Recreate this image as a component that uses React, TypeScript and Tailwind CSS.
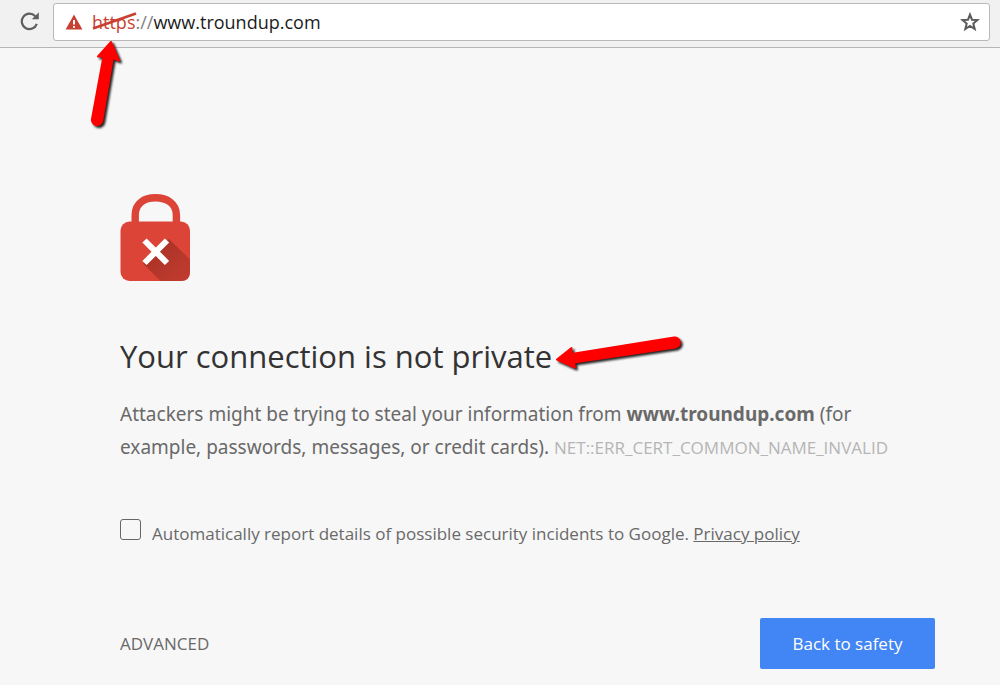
import { FC } from 'react'

const ReloadIcon: FC = () => (
  <svg viewBox="0 0 20 20" className="w-5 h-5" aria-hidden="true">
    <path d="M16.8 12.9A7.700 7.700 0 1 1 15.2 5.2" fill="none" stroke="#5f5f5f" strokeWidth="2.2" />
    <path d="M18.8 1.3V8.3H11.8Z" fill="#5f5f5f" />
  </svg>
)

const WarningIcon: FC = () => (
  <svg viewBox="0 0 18 16" className="w-[18px] h-4 shrink-0" aria-hidden="true">
    <path d="M9 0.6L17.4 15.4H0.6Z" fill="#c93f31" />
    <path d="M8 6H10V10.6H8ZM8 12H10V13.8H8Z" fill="#fff" />
  </svg>
)

const StarIcon: FC = () => (
  <svg viewBox="0 0 20 20" className="w-5 h-5" aria-hidden="true">
    <path
      d="M10 2.6L12 7.7L17.5 8.1L13.3 11.6L14.7 17L10 14L5.3 17L6.7 11.6L2.5 8.1L8 7.7Z"
      fill="none"
      stroke="#5a5a5a"
      strokeWidth="2"
    />
  </svg>
)

const LockIcon: FC = () => (
  <svg viewBox="0 0 70 87" className="w-[70px] h-[87px]" aria-hidden="true">
    <defs>
      <linearGradient id="lock-shadow" x1="0" y1="0" x2="1" y2="1">
        <stop offset="0.2" stopColor="#a93226" />
        <stop offset="1" stopColor="#c43c30" />
      </linearGradient>
    </defs>
    <path
      d="M15.2 30V21C15.2 9.500 24 3.800 35.500 3.800S56.400 9.500 56.400 21V30"
      fill="none"
      stroke="#db4437"
      strokeWidth="7.400"
    />
    <rect x="0.500" y="27.500" width="69.500" height="59.500" rx="9" fill="#db4437" />
    <path d="M49 45L70 65.500V78Q70 87 61 87H40.500L23 69.500Z" fill="url(#lock-shadow)" />
    <path d="M24.500 46.500L47 69M47 46.500L24.500 69" stroke="#fff" strokeWidth="6" />
  </svg>
)

const UpArrow: FC = () => (
  <svg
    viewBox="0 0 40 96"
    className="absolute left-[-5px] top-8 w-10 h-24 pointer-events-none"
    aria-hidden="true"
  >
    <path
      d="M24 2L32 20.500L25.800 18L15.300 80.500A5.200 5.200 0 0 1 5 79L16.500 16.500L11 16.500Z"
      fill="#f00"
      stroke="#f00"
      strokeWidth="2"
      strokeLinejoin="round"
      className="drop-shadow-[2px_2px_1px_#222]"
    />
  </svg>
)

const LeftArrow: FC = () => (
  <svg
    viewBox="0 0 136 44"
    className="absolute left-full top-px ml-1 w-[136px] h-11 pointer-events-none"
    aria-hidden="true"
  >
    <path
      d="M1 23.500L15.500 12L15.500 18L118 1.500A5 5 0 0 1 119.500 11.500L18 26.500L19 31.500Z"
      fill="#f00"
      stroke="#f00"
      strokeWidth="2"
      strokeLinejoin="round"
      className="drop-shadow-[2px_2px_1px_#222]"
    />
  </svg>
)

const Toolbar: FC = () => (
  <header className="flex items-start h-12 pt-[3px] pl-5 pr-[10px] gap-[13px] bg-[#f1f1f1] border-b border-[#b6b6b6]">
    <button type="button" aria-label="Reload" className="mt-2">
      <ReloadIcon />
    </button>
    <div className="flex flex-1 items-center h-[38px] pl-[11px] pr-[9px] bg-white border border-[#b8b8b8] rounded-[3px] text-lg">
      <WarningIcon />
      <label htmlFor="address" className="relative ml-[9px] text-[#808080]">
        <span className="text-[#c93f31]">https</span>://
        <svg viewBox="0 0 46 18" className="absolute left-0 top-1 w-[46px] h-[18px]" aria-hidden="true">
          <path d="M1 16.500L44 1.500" stroke="#c93f31" strokeWidth="2.600" />
        </svg>
        <UpArrow />
      </label>
      <input
        id="address"
        type="text"
        defaultValue="www.troundup.com"
        className="flex-1 min-w-0 text-[#1b1b1b] bg-transparent outline-none"
      />
      <button type="button" aria-label="Bookmark this page">
        <StarIcon />
      </button>
    </div>
  </header>
)

const App: FC = () => {
  return (
    <div className="min-h-screen bg-[#f7f7f7] text-[#696969] font-['Open_Sans','Noto_Sans',sans-serif]">
      <Toolbar />
      <main className="pt-[146px] pl-[120px] pr-[65px] pb-4">
        <LockIcon />
        <h1 className="mt-[55px] text-[31px] leading-10 text-[#333]">
          <span className="relative">
            Your connection is not private
            <LeftArrow />
          </span>
        </h1>
        <p className="mt-[22px] max-w-[800px] text-[19px] leading-[33px] font-['Noto_Sans',sans-serif]">
          Attackers might be trying to steal your information from <strong>www.troundup.com</strong> (for
          example, passwords, messages, or credit cards).{' '}
          <span className="text-[17px] text-[#b5b5b5] font-['Open_Sans',sans-serif]">
            NET::ERR_CERT_COMMON_NAME_INVALID
          </span>
        </p>
        <div className="flex items-start gap-[11px] mt-[55px] text-[17px] leading-6">
          <input
            id="report"
            type="checkbox"
            className="appearance-none w-[21px] h-[21px] shrink-0 border border-[#666] rounded-[3px] checked:bg-[#4285f4]"
          />
          <p className="mt-[3px]">
            <label htmlFor="report">
              Automatically report details of possible security incidents to Google.
            </label>{' '}
            <a href="#privacy" className="underline">
              Privacy policy
            </a>
          </p>
        </div>
        <div className="flex items-center justify-between mt-[72px] text-[17px] leading-6">
          <button type="button">ADVANCED</button>
          <button type="button" className="w-[175px] h-[51px] rounded-xs bg-[#4285f4] text-white">
            Back to safety
          </button>
        </div>
      </main>
    </div>
  )
}

export default App
